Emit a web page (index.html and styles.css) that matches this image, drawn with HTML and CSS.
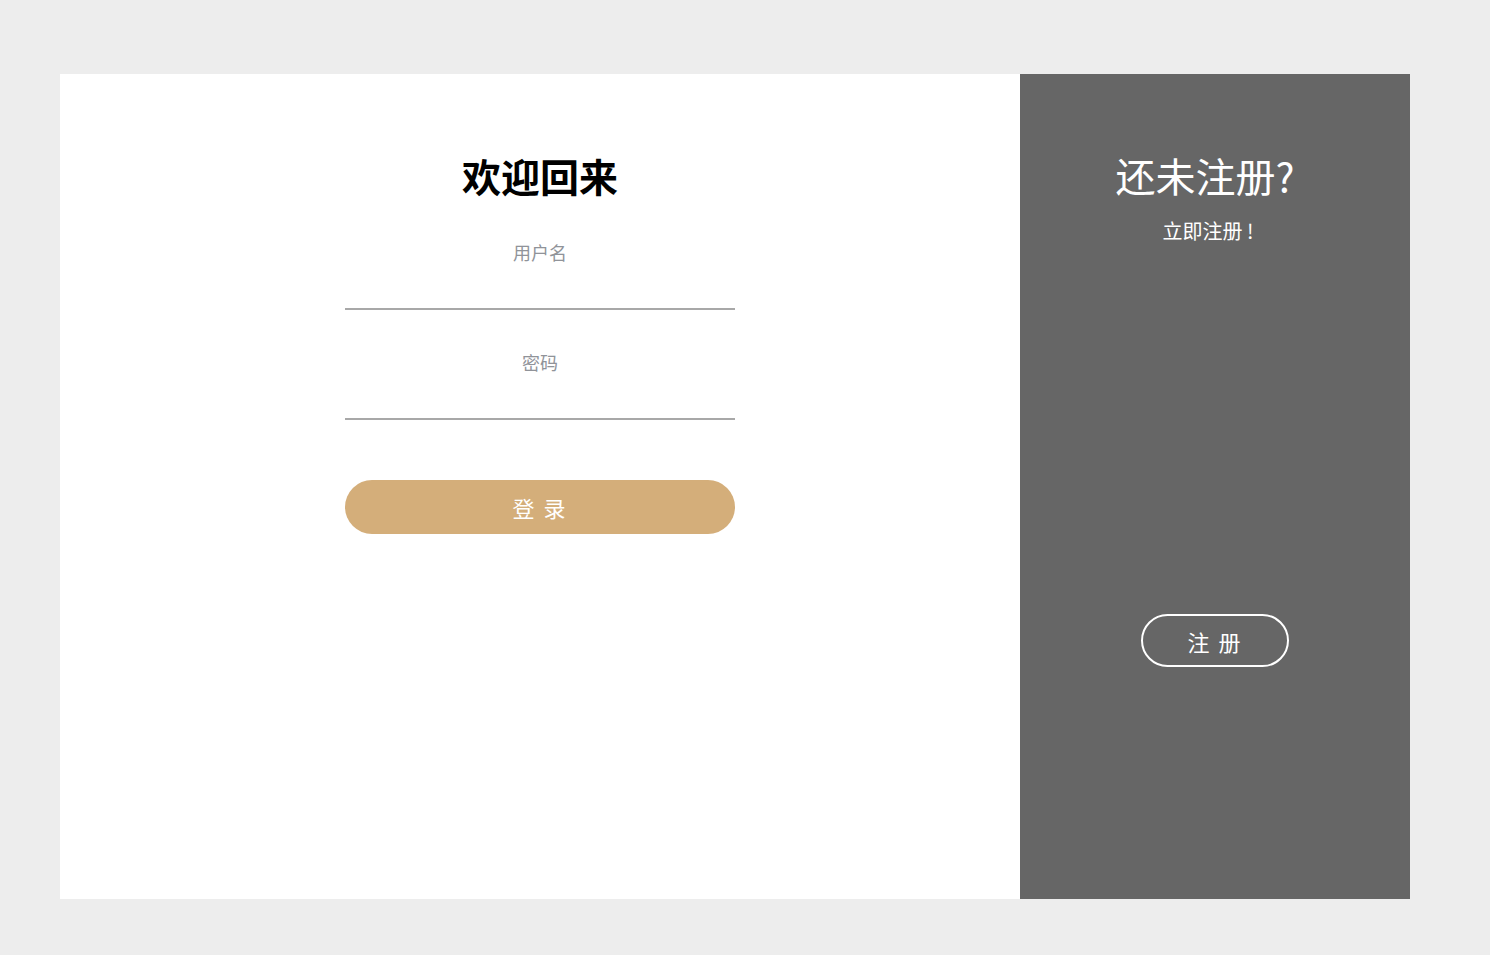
FILE: index.html
```html
<!DOCTYPE html>
<html lang="zh">
<head>
<meta charset="utf-8">
<title>登录</title>
<link rel="stylesheet" href="styles.css">
</head>
<body>
<div class="container">
  <div class="login">
    <h2 class="title">欢迎回来</h2>
    <form class="form">
      <label class="field">
        <span class="label">用户名</span>
        <input class="input" type="text">
      </label>
      <label class="field">
        <span class="label">密码</span>
        <input class="input" type="password">
      </label>
      <button type="button" class="submit">登 录</button>
    </form>
  </div>
  <div class="side">
    <h2 class="side-title">还未注册?</h2>
    <p class="side-sub">立即注册 !</p>
    <button type="button" class="register">注 册</button>
  </div>
</div>
</body>
</html>
```
FILE: styles.css
```css
* { box-sizing: border-box; }
html, body { margin: 0; padding: 0; }
body {
  background: #ededed;
  font-family: "Microsoft YaHei", "Noto Sans CJK SC", "Noto Sans", sans-serif;
  padding: 74px 0 0 60px;
  min-height: 955px;
}
.container {
  width: 1350px;
  height: 825px;
  display: flex;
}
.login {
  width: 960px;
  background: #fff;
  padding-top: 81px;
  display: flex;
  flex-direction: column;
  align-items: center;
}
.title {
  margin: 0;
  font-size: 39px;
  line-height: 40px;
  font-weight: 700;
  color: #000;
}
.form {
  width: 390px;
  margin-top: 47px;
  display: flex;
  flex-direction: column;
}
.field {
  display: flex;
  flex-direction: column;
  margin-bottom: 42px;
}
.label {
  display: block;
  text-align: center;
  font-size: 18px;
  line-height: 20px;
  color: #909399;
}
.input {
  display: block;
  width: 100%;
  height: 48px;
  border: none;
  border-bottom: 2px solid #a8a8a8;
  outline: none;
  background: transparent;
  font-size: 16px;
  padding: 0;
}
.submit {
  margin-top: 18px;
  height: 54px;
  width: 100%;
  border: none;
  border-radius: 27px;
  background: #d4ae7a;
  color: #fff;
  font-family: inherit;
  font-size: 22px;
  letter-spacing: 2px;
  cursor: pointer;
}
.side {
  width: 390px;
  background: #666;
  color: #fff;
  padding-top: 81px;
  display: flex;
  flex-direction: column;
  align-items: center;
}
.side-title {
  margin: 0;
  font-size: 40px;
  line-height: 40px;
  font-weight: 400;
  padding-right: 20px;
}
.side-sub {
  margin: 25px 0 0;
  font-size: 20px;
  line-height: 22px;
  padding-right: 14px;
}
.register {
  margin-top: 372px;
  width: 148px;
  height: 53px;
  border: 2px solid #fff;
  border-radius: 27px;
  background: transparent;
  color: #fff;
  font-family: inherit;
  font-size: 22px;
  letter-spacing: 2px;
  cursor: pointer;
}
```
